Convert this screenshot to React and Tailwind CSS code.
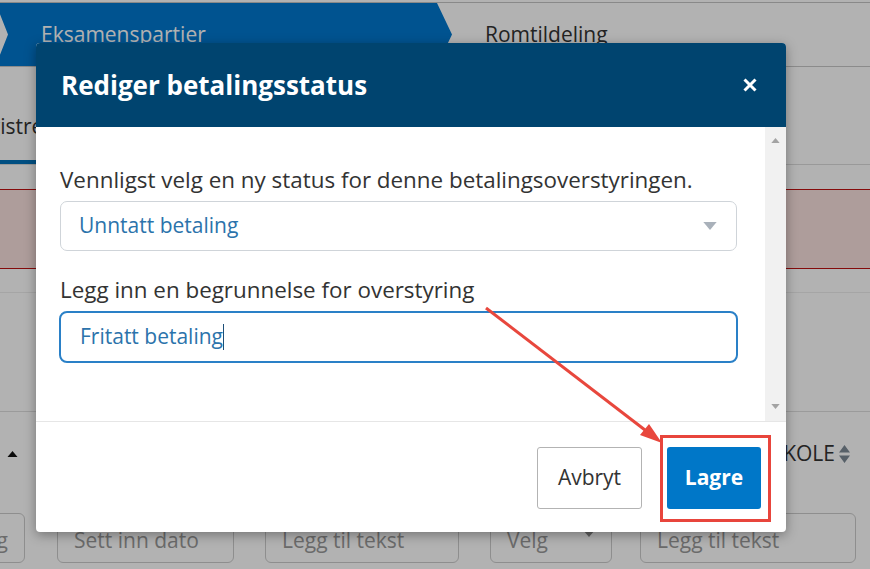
import React from 'react';

const FilterBox = ({ className, text, caret }) => (
  <div
    className={`h-[50px] shrink-0 rounded-[6px] border border-[#cccccc] flex items-center justify-between px-[16px] pt-[5px] text-[21px] text-[#9a9a9a] ${className}`}
  >
    <span>{text}</span>
    {caret && (
      <svg width="12" height="7" viewBox="0 0 12 7" className="-mt-[14px]">
        <path d="M0 0h12L6 7z" fill="#8a8a8a" />
      </svg>
    )}
  </div>
);

const Triangle = ({ up, color, w = 9, h = 5 }) => (
  <svg width={w} height={h} viewBox="0 0 10 6">
    <path d={up ? 'M0 6L5 0l5 6z' : 'M0 0h10L5 6z'} fill={color} />
  </svg>
);

const Page = () => (
  <div className="flex flex-col">
    <div className="h-[3px] border-b border-[#c4c4c4]" />
    <nav className="flex h-[64px] border-b border-[#c8c8c8]">
      <div className="w-[452px] bg-[#0078ce] flex items-center pl-[41px] text-[21px] text-white [clip-path:polygon(0_0,437px_0,100%_50%,437px_100%,0_100%,0_82%,8px_50%,0_18%)]">
        Eksamenspartier
      </div>
      <div className="flex items-center pl-[33px] text-[21px] text-[#333]">Romtildeling</div>
    </nav>
    <div className="h-[98px] flex items-end border-b border-[#dcdcdc]">
      <div className="-ml-[36px] w-[180px] h-[62px] flex items-center pb-[8px] border-b-[4px] border-[#0071bb] text-[21px] text-[#333]">
        Registrering
      </div>
    </div>
    <div className="mt-[24px] h-[80px] bg-[#fae1de] border-y border-[#bf1010]" />
    <div className="mt-[23px] h-[119px] border-t border-[#ececec]" />
    <div className="h-[88px] border-t border-[#dedede] flex items-center justify-between pl-[7px] pr-[20px] pb-[4px]">
      <Triangle up color="#111" w={11} h={6} />
      <div className="flex items-center gap-[4px] text-[21px] text-[#333]">
        <span>SKOLE</span>
        <svg width="11" height="18" viewBox="0 0 11 18">
          <path d="M0 7.5L5.5 0 11 7.5zM0 10.5h11L5.5 18z" fill="#7d8a96" />
        </svg>
      </div>
    </div>
    <div className="mt-[14px] flex">
      <FilterBox className="-ml-[75px] w-[100px] justify-end" text="Velg" />
      <FilterBox className="ml-[32px] w-[177px]" text="Sett inn dato" />
      <FilterBox className="ml-[31px] w-[194px]" text="Legg til tekst" />
      <FilterBox className="ml-[31px] w-[122px]" text="Velg" caret />
      <FilterBox className="ml-[28px] w-[216px]" text="Legg til tekst" />
    </div>
  </div>
);

const Modal = () => (
  <div className="absolute left-[36px] top-[43px] w-[750px] rounded-[4px] bg-white shadow-[0_3px_12px_rgba(0,0,0,0.35)] overflow-hidden">
    <div className="h-[84px] bg-[#00446f] flex items-center justify-between pl-[25px] pr-[29px]">
      <h2 className="text-[26px] font-bold text-white">Rediger betalingsstatus</h2>
      <svg width="14" height="14" viewBox="0 0 14 14">
        <path d="M1.5 1.5l11 11M12.5 1.5l-11 11" stroke="#fff" strokeWidth="3" />
      </svg>
    </div>
    <div className="h-[294px] flex">
      <div className="flex-1 pl-[24px] pr-[28px] pt-[38px]">
        <p className="text-[22.4px] leading-[30px] text-[#333]">
          Vennligst velg en ny status for denne betalingsoverstyringen.
        </p>
        <div className="mt-[6px] h-[50px] rounded-[7px] border border-[#cfd4d9] flex items-center justify-between pl-[18px] pr-[19px]">
          <span className="text-[21px] text-[#2b73ab]">Unntatt betaling</span>
          <Triangle color="#a9b1ba" w={14} h={8} />
        </div>
        <p className="mt-[24px] text-[22.4px] leading-[30px] text-[#333]">
          Legg inn en begrunnelse for overstyring
        </p>
        <div className="mt-[6px] -mx-[1px] h-[52px] rounded-[8px] border-2 border-[#2a80c7] flex items-center pl-[19px]">
          <span className="text-[21px] text-[#2b73ab]">Fritatt betaling</span>
          <span className="w-[1px] h-[26px] bg-[#1d4f78]" />
        </div>
      </div>
      <div className="w-[21px] bg-[#f1f1f1] flex flex-col items-center justify-between pt-[11px] pb-[12px]">
        <Triangle up color="#a3a3a3" />
        <Triangle color="#a3a3a3" />
      </div>
    </div>
    <div className="h-[111px] border-t border-[#e6e6e6] flex justify-end items-start gap-[25px] pt-[25px] pr-[25px]">
      <button className="w-[105px] h-[62px] rounded-[3px] border border-[#b3b3b3] bg-white text-[21px] text-[#333]">
        Avbryt
      </button>
      <button className="w-[94px] h-[62px] rounded-[3px] bg-[#0077c8] text-[21px] font-bold text-white">
        Lagre
      </button>
    </div>
  </div>
);

export default function App() {
  return (
    <div className="relative w-[870px] h-[569px] overflow-hidden bg-white font-['Open_Sans',sans-serif]">
      <Page />
      <div className="absolute inset-0 bg-black/30" />
      <Modal />
      {/* annotation: red frame and arrow */}
      <div className="absolute left-[660px] top-[435px] w-[111px] h-[87px] border-[3px] border-[#e8453c]" />
      <svg className="absolute inset-0 pointer-events-none" width="870" height="569">
        <line x1="486" y1="308" x2="645" y2="430" stroke="#e8473d" strokeWidth="3" />
        <polygon points="662,443 640,435 649,424" fill="#e8473d" />
      </svg>
    </div>
  );
}
